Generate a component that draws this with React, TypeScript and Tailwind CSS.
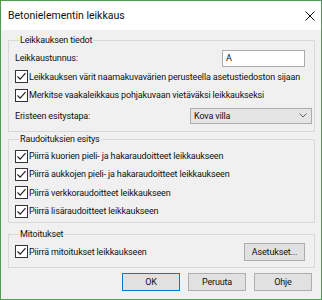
import React from "react";

const Check = () => (
  <span className="w-[13px] h-[13px] border border-[#333333] bg-white flex items-center justify-center shrink-0">
    <svg width="11" height="11" viewBox="0 0 11 11">
      <path d="M1.5 5.5 L4.2 8.2 L9.5 2.2" fill="none" stroke="#222" strokeWidth="1.2" />
    </svg>
  </span>
);

const CheckRow = ({ label, h = "h-[18px]" }: { label: string; h?: string }) => (
  <div className={`flex items-center gap-[1px] ${h}`}>
    <Check />
    <span className="whitespace-nowrap">{label}</span>
  </div>
);

const Btn = ({ label, def = false, w = "w-[58px]" }: { label: string; def?: boolean; w?: string }) => (
  <div
    className={`${w} h-[18px] flex items-center justify-center bg-[#e1e1e1] border ${
      def ? "border-[#0078d7]" : "border-[#adadad]"
    }`}
  >
    {label}
  </div>
);

export default function App() {
  return (
    <div className="w-[322px] h-[300px] border border-[#4c9f4c] bg-[#f0f0f0] flex flex-col font-['Roboto',sans-serif] text-[9px] tracking-[-0.15px] leading-[12px] text-[#111] overflow-hidden">
      <div className="h-[29px] bg-white flex items-center justify-between pl-[7px] pr-[6px] shrink-0">
        <span className="text-[10.5px] tracking-[0px]">Betonielementin leikkaus</span>
        <svg width="10" height="10" viewBox="0 0 10 10">
          <path d="M0.5 0.5 L9.5 9.5 M9.5 0.5 L0.5 9.5" stroke="#111" strokeWidth="1" />
        </svg>
      </div>
      <div className="flex flex-col pl-[7px] pr-[6px]">
        <fieldset className="min-w-0 mt-[4px] border border-[#d9d9d9] pl-[6px] pr-[2px] pb-[4px]">
          <legend className="ml-[4px] px-[1px] leading-[12px]">Leikkauksen tiedot</legend>
          <div className="mt-[3px] h-[18px] flex items-center justify-between pr-[7px]">
            <span>Leikkaustunnus:</span>
            <div className="w-[83px] h-[17px] bg-white border border-[#acacac] flex items-center pl-[3px]">A</div>
          </div>
          <CheckRow label="Leikkauksen värit naamakuvavärien perusteella asetustiedoston sijaan" h="h-[19px]" />
          <CheckRow label="Merkitse vaakaleikkaus pohjakuvaan vietäväksi leikkaukseksi" />
          <div className="h-[23px] flex items-center justify-between">
            <span>Eristeen esitystapa:</span>
            <div className="w-[122px] h-[16px] bg-[#e5e5e5] border border-[#acacac] flex items-center justify-between pl-[3px] pr-[4px]">
              <span>Kova villa</span>
              <svg width="8" height="5" viewBox="0 0 8 5">
                <path d="M0.5 0.5 L4 4 L7.5 0.5" fill="none" stroke="#666" strokeWidth="1" />
              </svg>
            </div>
          </div>
        </fieldset>
        <fieldset className="min-w-0 mt-[1px] border border-[#d9d9d9] pl-[6px] pb-[2px]">
          <legend className="ml-[4px] px-[1px] leading-[12px]">Raudoituksien esitys</legend>
          <div className="pt-[2px]">
            <CheckRow label="Piirrä kuorien pieli- ja hakaraudoitteet leikkaukseen" />
            <CheckRow label="Piirrä aukkojen pieli- ja hakaraudoitteet leikkaukseen" />
            <CheckRow label="Piirrä verkkoraudoitteet leikkaukseen" h="h-[19px]" />
            <CheckRow label="Piirrä lisäraudoitteet leikkaukseen" />
          </div>
        </fieldset>
        <fieldset className="min-w-0 mt-[5px] border border-[#d9d9d9] pl-[6px] pr-[9px] pb-[5px]">
          <legend className="ml-[4px] px-[1px] leading-[12px]">Mitoitukset</legend>
          <div className="pt-[1px] h-[22px] flex items-center justify-between">
            <div className="flex items-center gap-[1px]">
              <Check />
              <span>Piirrä mitoitukset leikkaukseen</span>
            </div>
            <Btn label="Asetukset..." w="w-[61px]" />
          </div>
        </fieldset>
        <div className="mt-[5px] flex justify-end gap-[8px] pr-[3px]">
          <Btn label="OK" def />
          <Btn label="Peruuta" />
          <Btn label="Ohje" />
        </div>
      </div>
    </div>
  );
}
